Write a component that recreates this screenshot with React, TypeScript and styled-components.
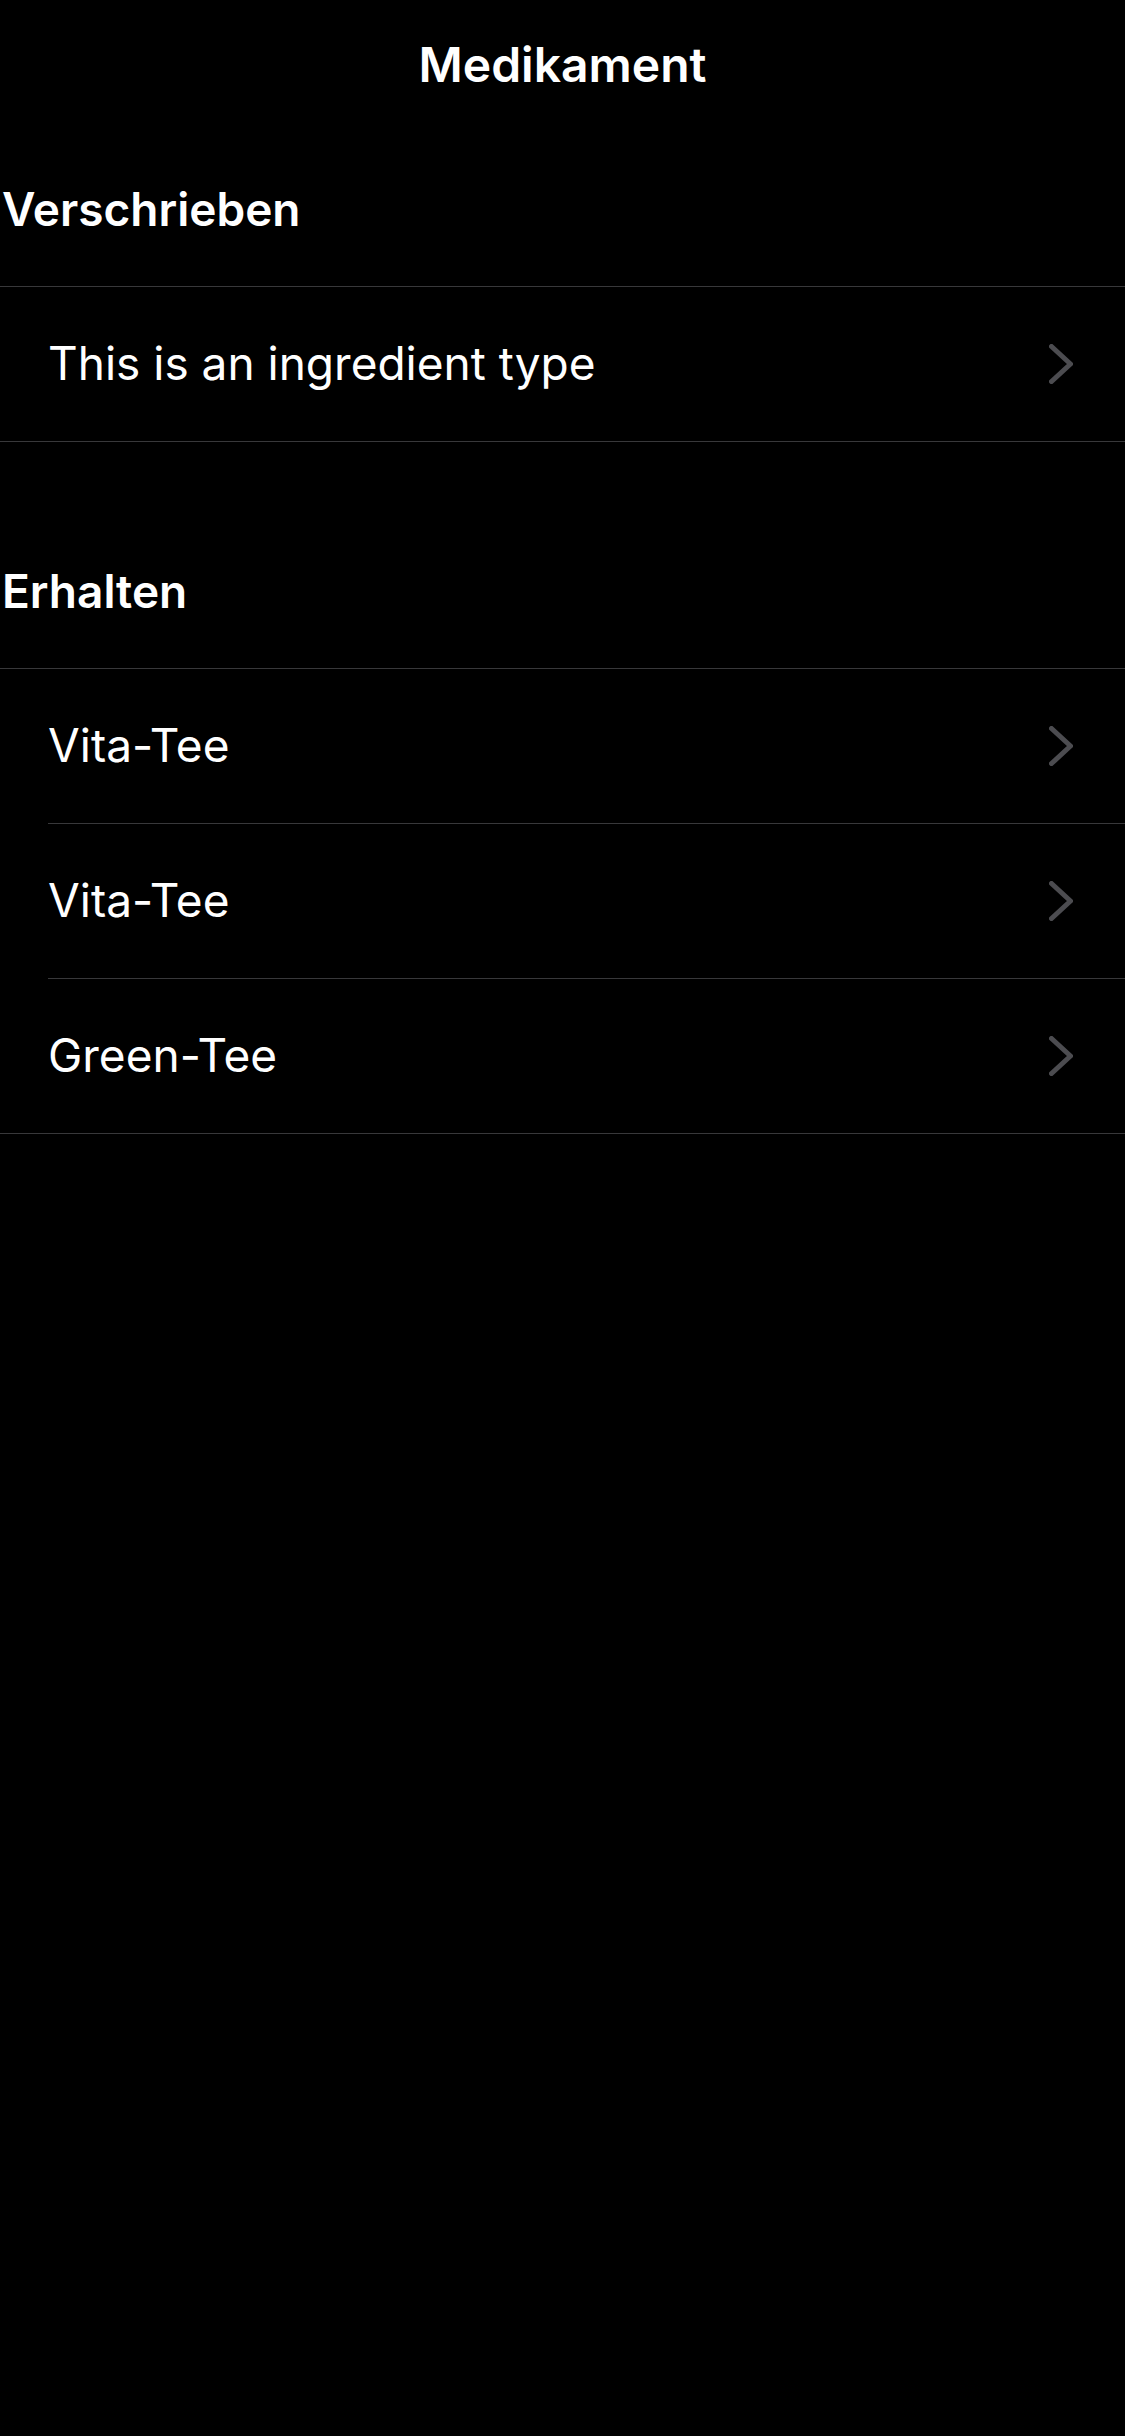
import React from "react";
import styled, { createGlobalStyle } from "styled-components";

const GlobalStyle = createGlobalStyle`
  html, body {
    margin: 0;
    padding: 0;
    background: #000000;
  }
  body {
    font-family: Inter, "Noto Sans", "Liberation Sans", sans-serif;
    color: #ffffff;
    -webkit-font-smoothing: antialiased;
  }
`;

const Screen = styled.div`
  width: 1125px;
  min-height: 2436px;
  background: #000000;
  display: flex;
  flex-direction: column;
`;

const NavBar = styled.header`
  display: flex;
  justify-content: center;
  padding-top: 41px;
  height: 49px;
`;

const NavTitle = styled.h1`
  margin: 0;
  font-size: 48px;
  line-height: 48px;
  font-weight: 600;
  color: #ffffff;
`;

const Sections = styled.div`
  display: flex;
  flex-direction: column;
  gap: 30px;
`;

const Section = styled.section`
  display: flex;
  flex-direction: column;
`;

const SectionHeader = styled.h2`
  margin: 0;
  padding: 95px 0 53px 2px;
  font-size: 46px;
  line-height: 48px;
  font-weight: 600;
  color: #ffffff;
`;

const List = styled.ul`
  list-style: none;
  margin: 0;
  padding: 0;
  border-top: 1px solid #38383a;
  border-bottom: 1px solid #38383a;
`;

const Row = styled.li<{ $last?: boolean }>`
  display: flex;
  align-items: center;
  justify-content: space-between;
  height: 154px;
  margin-left: 48px;
  padding-right: 52px;
  border-bottom: ${(p) => (p.$last ? "none" : "1px solid #38383a")};
`;

const RowLabel = styled.span`
  font-size: 46px;
  line-height: 48px;
  margin-bottom: 3px;
  font-weight: 400;
  color: #ffffff;
`;

const Chevron = styled.svg`
  width: 24px;
  height: 40px;
  flex: none;
`;

const ChevronIcon = () => (
  <Chevron viewBox="0 0 24 40">
    <polyline
      points="2.5,2.5 21.5,20 2.5,37.5"
      fill="none"
      stroke="#4c4c50"
      strokeWidth={5}
      strokeLinecap="round"
      strokeLinejoin="round"
    />
  </Chevron>
);

const sections = [
  { title: "Verschrieben", items: ["This is an ingredient type"] },
  { title: "Erhalten", items: ["Vita-Tee", "Vita-Tee", "Green-Tee"] },
];

export default function App() {
  return (
    <>
      <GlobalStyle />
      <Screen>
        <NavBar>
          <NavTitle>Medikament</NavTitle>
        </NavBar>
        <Sections>
          {sections.map((s) => (
            <Section key={s.title}>
              <SectionHeader>{s.title}</SectionHeader>
              <List>
                {s.items.map((item, i) => (
                  <Row key={i} $last={i === s.items.length - 1}>
                    <RowLabel>{item}</RowLabel>
                    <ChevronIcon />
                  </Row>
                ))}
              </List>
            </Section>
          ))}
        </Sections>
      </Screen>
    </>
  );
}
